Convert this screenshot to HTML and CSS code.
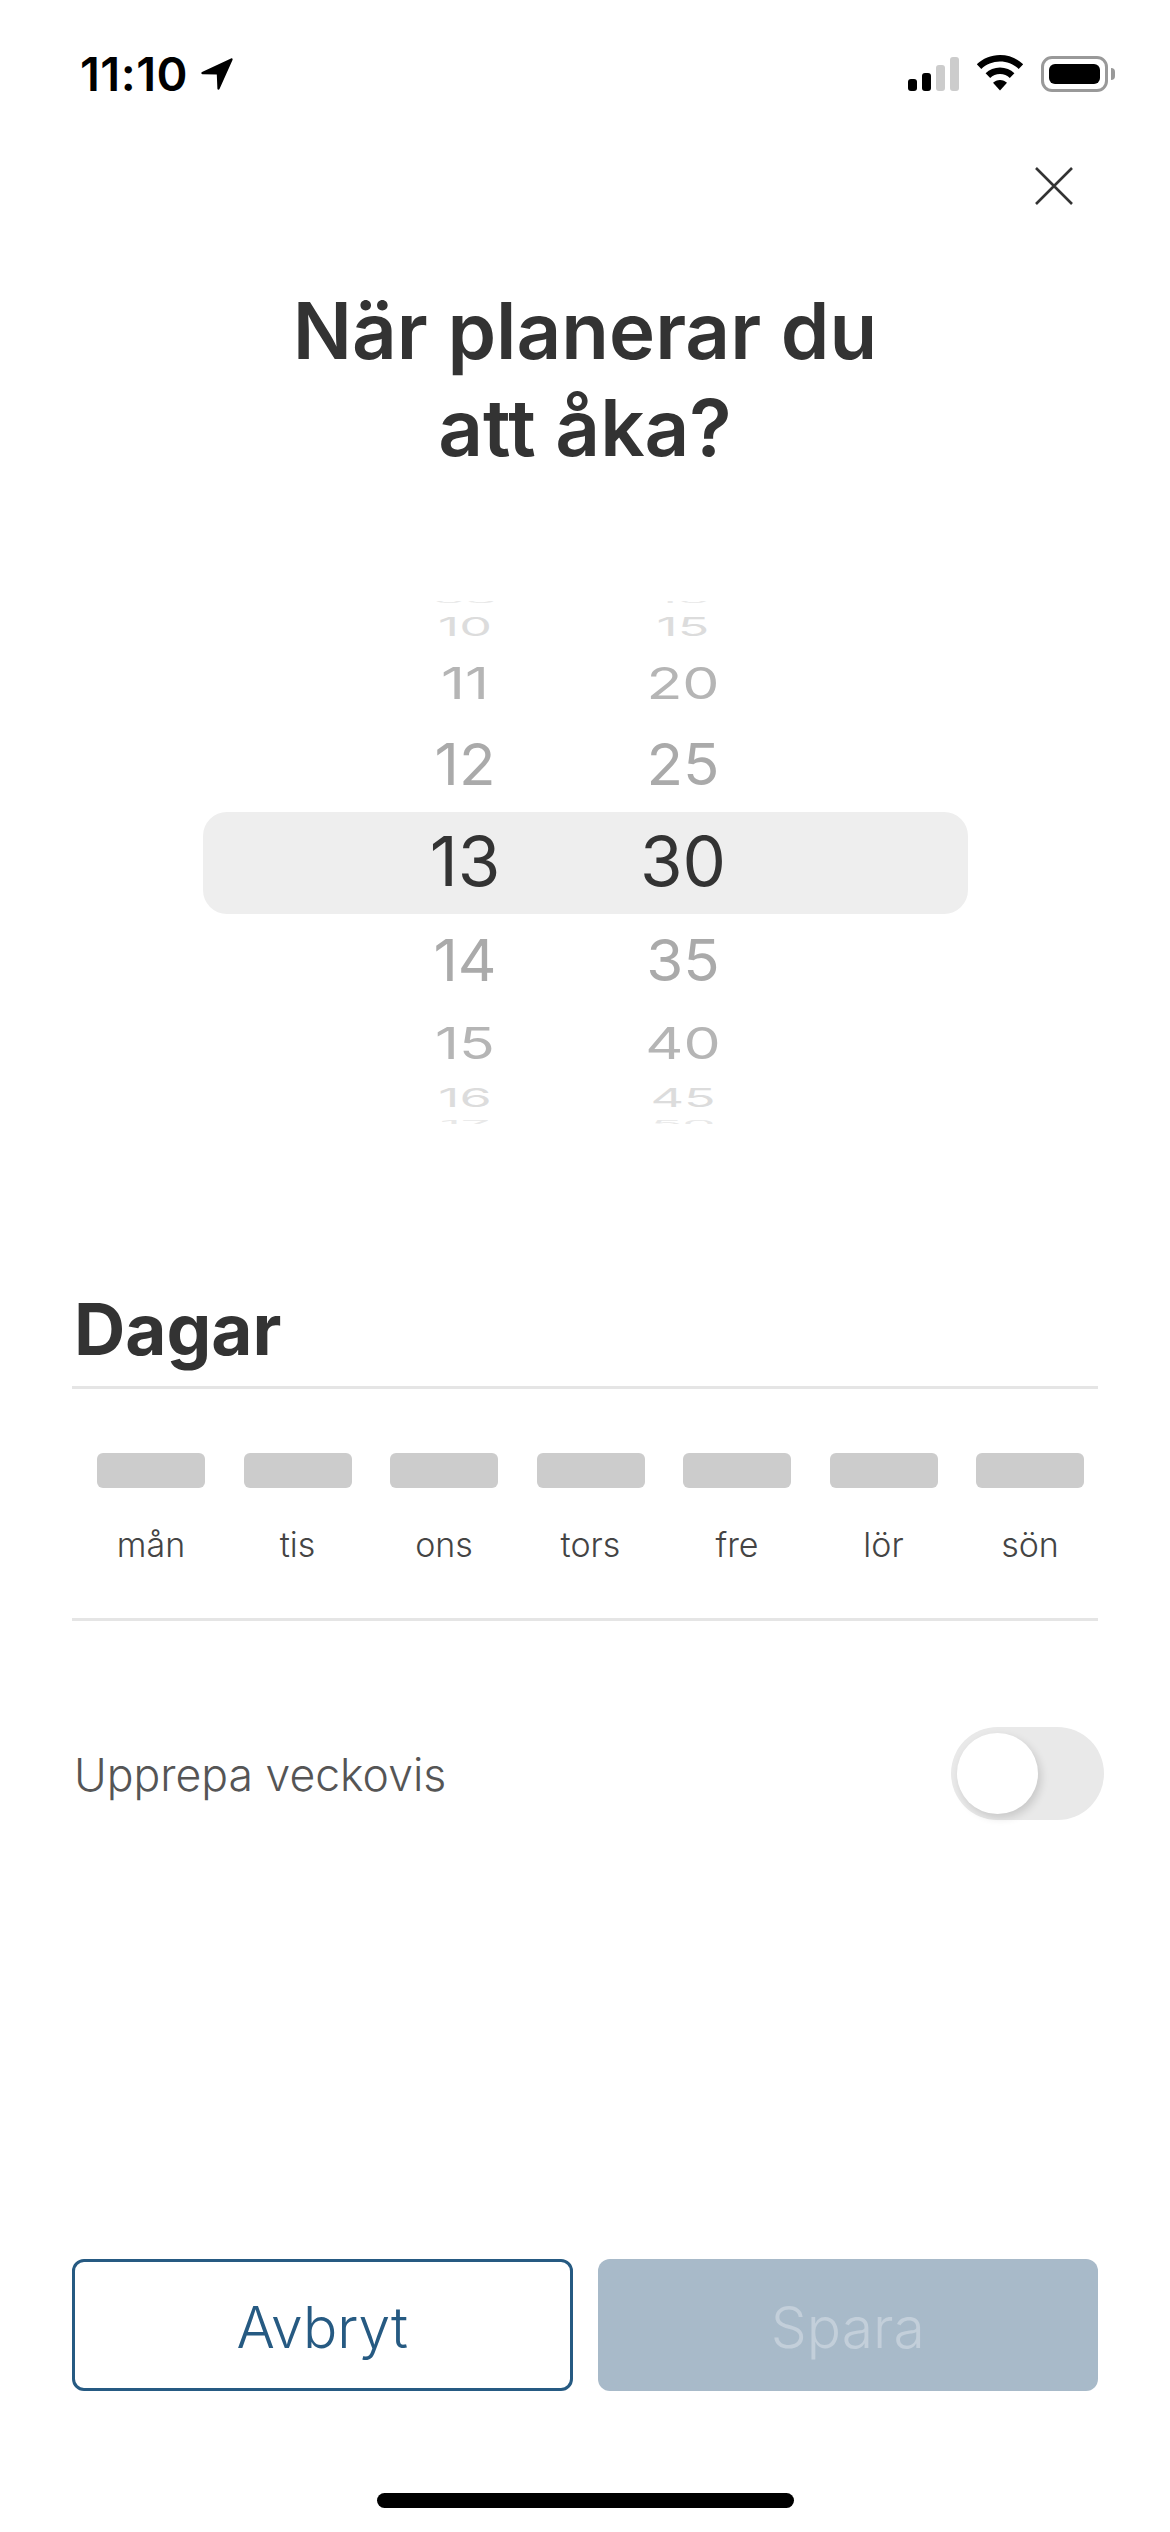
FILE: index.html
```html
<!DOCTYPE html>
<html lang="sv">
<head>
    <meta charset="utf-8"/>
    <meta name="viewport" content="width=device-width, initial-scale=1.0"/>
    <title>När planerar du att åka?</title>
    <link rel="stylesheet" href="styles.css">
</head>
<body>
<div class="screen">
    <div class="status-bar">
        <div class="status-time">
            <span>11:10</span>
            <svg class="status-arrow" width="33" height="33" viewBox="0 0 33 33">
                <path d="M1 15 30 1.500c1.200-.5 2 .3 1.500 1.500L18.500 32c-.5 1.100-2 .9-2.100-.2l-.6-14.300L1.400 17.200C.2 17.100-.1 15.500 1 15z" fill="#000"/>
            </svg>
        </div>
        <div class="status-icons">
            <div class="signal">
                <span class="bar bar-1"></span>
                <span class="bar bar-2"></span>
                <span class="bar bar-3"></span>
                <span class="bar bar-4"></span>
            </div>
            <svg class="wifi" width="48" height="36" viewBox="0 0 48 36">
                <path d="M24 0C15 0 6.800 3.500 .8 9.300l4.500 4.700C10.200 9.300 16.800 6.500 24 6.500s13.800 2.800 18.700 7.500l4.500-4.700C41.200 3.500 33 0 24 0z" fill="#000"/>
                <path d="M24 12.500c-5.600 0-10.700 2.200-14.400 5.800l4.600 4.700c2.500-2.400 6-3.900 9.800-3.900s7.300 1.500 9.800 3.900l4.600-4.700C34.700 14.700 29.600 12.500 24 12.500z" fill="#000"/>
                <path d="M24 25c-2.800 0-5.200 1.100-7 2.800L24 35.500l7-7.700C29.200 26.100 26.800 25 24 25z" fill="#000"/>
            </svg>
            <div class="battery">
                <div class="battery-body"><div class="battery-fill"></div></div>
                <div class="battery-nub"></div>
            </div>
        </div>
    </div>

    <div class="close-row">
        <svg width="38" height="38" viewBox="0 0 38 38">
            <path d="M1 1 37 37M37 1 1 37" stroke="#333" stroke-width="2.600" fill="none"/>
        </svg>
    </div>

    <h1 class="title">När planerar du<br>att åka?</h1>

    <div class="wheel">
        <div class="wheel-inner">
            <div class="wheel-row row-edge-top"><span>09</span><span>10</span></div>
            <div class="wheel-row row-far"><span>10</span><span>15</span></div>
            <div class="wheel-row row-near"><span>11</span><span>20</span></div>
            <div class="wheel-row row-close"><span>12</span><span>25</span></div>
            <div class="wheel-row row-current"><span>13</span><span>30</span></div>
            <div class="wheel-row row-close row-close-below"><span>14</span><span>35</span></div>
            <div class="wheel-row row-near row-near-below"><span>15</span><span>40</span></div>
            <div class="wheel-row row-far row-far-below"><span>16</span><span>45</span></div>
            <div class="wheel-row row-edge-bottom"><span>17</span><span>50</span></div>
        </div>
    </div>

    <div class="days">
        <h2 class="days-title">Dagar</h2>
        <div class="day-list">
            <div class="day"><div class="day-box"></div><span>mån</span></div>
            <div class="day"><div class="day-box"></div><span>tis</span></div>
            <div class="day"><div class="day-box"></div><span>ons</span></div>
            <div class="day"><div class="day-box"></div><span>tors</span></div>
            <div class="day"><div class="day-box"></div><span>fre</span></div>
            <div class="day"><div class="day-box"></div><span>lör</span></div>
            <div class="day"><div class="day-box"></div><span>sön</span></div>
        </div>
    </div>

    <div class="repeat-row">
        <span class="repeat-label">Upprepa veckovis</span>
        <div class="toggle"><div class="toggle-knob"></div></div>
    </div>

    <div class="actions">
        <button class="btn btn-cancel">Avbryt</button>
        <button class="btn btn-save" disabled>Spara</button>
    </div>

    <div class="home-indicator"></div>
</div>
</body>
</html>
```

FILE: styles.css
```css
* {
    box-sizing: border-box;
}

body {
    margin: 0;
    background-color: #fff;
    color: #333;
    font-family: Inter, "Liberation Sans", sans-serif;
}

.screen {
    width: 1170px;
    height: 2532px;
    display: flex;
    flex-direction: column;
    overflow: hidden;
}

/* status bar */
.status-bar {
    display: flex;
    justify-content: space-between;
    align-items: flex-start;
    height: 92px;
    padding: 55px 55px 0 80px;
}

.status-time {
    display: flex;
    align-items: center;
    gap: 13px;
    color: #000;
    font-size: 47px;
    font-weight: 600;
    line-height: 37px;
    letter-spacing: 0.5px;
}

.status-icons {
    display: flex;
    align-items: flex-start;
}

.signal {
    display: flex;
    align-items: flex-end;
    gap: 5px;
    height: 34px;
    margin-top: 2px;
    margin-right: 17px;
}

.bar {
    width: 9px;
    border-radius: 3px;
    background-color: #000;
}

.bar-1 { height: 12px; }
.bar-2 { height: 18px; }
.bar-3 { height: 26px; background-color: #ccc; }
.bar-4 { height: 34px; background-color: #ccc; }

.wifi {
    margin-right: 17px;
}

.battery {
    display: flex;
    align-items: center;
    height: 36px;
    margin-top: 1px;
}

.battery-body {
    width: 67px;
    height: 36px;
    padding: 5px;
    border: 3px solid #999;
    border-radius: 11px;
}

.battery-fill {
    width: 100%;
    height: 100%;
    border-radius: 6px;
    background-color: #000;
}

.battery-nub {
    width: 4px;
    height: 12px;
    margin-left: 3px;
    border-radius: 0 6px 6px 0;
    background-color: #999;
}

.close-row {
    display: flex;
    justify-content: flex-end;
    padding-right: 97px;
    margin-top: 75px;
}

.title {
    margin: 77px 0 0;
    font-size: 78px;
    font-weight: 600;
    line-height: 97px;
    text-align: center;
}

/* hour and minute wheel */
.wheel {
    flex: none;
    width: 765px;
    height: 523px;
    margin: 125px 0 0 203px;
    overflow: hidden;
}

.wheel-inner {
    margin-top: -13px;
}

.wheel-row {
    display: grid;
    grid-template-columns: 200px 200px;
    grid-template-rows: 100%;
    column-gap: 18px;
    align-items: center;
    justify-items: center;
    padding-left: 162px;
    line-height: 1;
}

.wheel-row span {
    display: block;
}

.row-edge-top,
.row-edge-bottom {
    color: #e8e8e8;
    font-size: 52px;
}

.row-edge-top { height: 24px; }
.row-edge-bottom { height: 18px; }
.row-edge-top span,
.row-edge-bottom span { transform: scaleY(0.16); }

.row-far {
    height: 30px;
    color: #dcdcdc;
    font-size: 52px;
}
.row-far span { transform: scaleY(0.5); }
.row-far-below { height: 34px; }

.row-near {
    height: 80px;
    color: #b5b5b5;
    font-size: 59px;
}
.row-near span { transform: scaleY(0.75); }
.row-near-below { height: 78px; }

.row-close {
    height: 84px;
    color: #aaa;
    font-size: 60px;
}
.row-close span { transform: scaleY(0.96); }
.row-close-below { height: 86px; }

.row-current {
    height: 102px;
    margin: 6px 0 3px;
    padding-bottom: 3px;
    border-radius: 24px;
    background-color: #eee;
    color: #333;
    font-size: 69px;
}

/* days */
.days {
    flex: none;
    margin: 0 72px;
    padding-top: 163px;
    border-bottom: 3px solid #e5e5e5;
}

.days-title {
    margin: 0;
    padding: 0 2px 15px;
    border-bottom: 3px solid #e5e5e5;
    font-size: 71px;
    font-weight: 700;
    line-height: 84px;
}

.day-list {
    display: flex;
    gap: 38.500px;
    height: 229px;
    padding: 64px 0 0 25px;
    margin-right: -5px;
}

.day {
    flex: 0 0 108px;
    display: flex;
    flex-direction: column;
    align-items: center;
    gap: 35px;
    color: #444;
    font-size: 34px;
    font-weight: 300;
    line-height: 44px;
}

.day-box {
    width: 108px;
    height: 35px;
    border-radius: 6px;
    background-color: #ccc;
}

/* repeat toggle */
.repeat-row {
    display: flex;
    justify-content: space-between;
    align-items: center;
    margin: 106px 66px 0 74px;
    color: #555;
    font-size: 44.500px;
    font-weight: 300;
}

.repeat-label {
    padding-top: 3px;
}

.toggle {
    width: 153px;
    height: 93px;
    padding: 6px;
    border-radius: 47px;
    background-color: #e9e9e9;
}

.toggle-knob {
    width: 81px;
    height: 81px;
    border-radius: 50%;
    background-color: #fff;
    box-shadow: 3px 4px 8px rgba(0, 0, 0, 0.14);
}

/* bottom buttons */
.actions {
    display: grid;
    grid-template-columns: 1fr 1fr;
    column-gap: 25px;
    margin: auto 72px 0;
}

.btn {
    height: 132px;
    padding: 4px 0 0;
    border-radius: 12px;
    font-family: inherit;
    font-size: 57px;
    font-weight: 300;
}

.btn-cancel {
    border: 3px solid #265a82;
    background-color: #fff;
    color: #265a82;
}

.btn-save {
    border: 0;
    background-color: #a8bac9;
    color: #c3cfda;
}

.home-indicator {
    flex: none;
    width: 417px;
    height: 15px;
    margin: 102px auto 24px;
    border-radius: 8px;
    background-color: #000;
}
```
